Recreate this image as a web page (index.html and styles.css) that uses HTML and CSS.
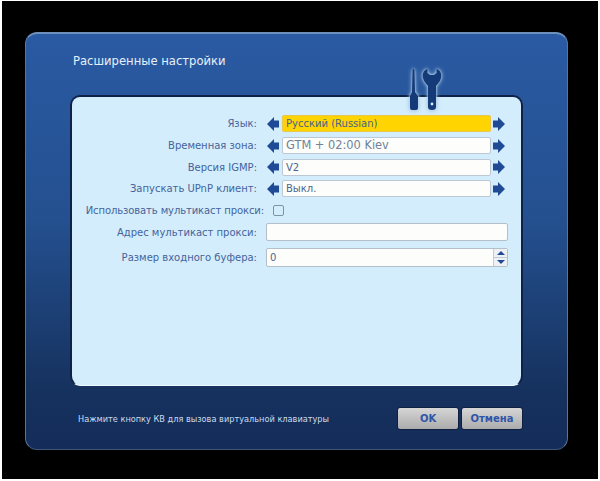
FILE: index.html
```html
<!DOCTYPE html>
<html lang="ru">
<head>
    <meta charset="UTF-8" />
    <title>Расширенные настройки</title>
    <link rel="stylesheet" href="styles.css">
</head>
<body>

<div class="screen">
    <div class="window">
        <h1 class="title">Расширенные настройки</h1>

        <div class="content">
            <svg class="tools" width="42" height="48" viewBox="0 0 42 48">
                <path class="tools-fill" d="M6.5 4 Q7.5 2 8.5 4 L9 26 L12 30 V42 Q12 44 10 44 H6 Q4 44 4 42 V30 L6 26 Z" />
                <path class="tools-fill" d="M21.5 3 C17.5 4 16 8 17 12 C18 16 20.5 18 22 20 V41 Q22 44 26 44 Q30 44 30 41 V20 C31.5 18 34 16 35 12 C36 8 34.5 4 30.5 3 V7 L28 9 H24 L21.5 7 Z" />
                <circle cx="26" cy="38" r="1.4" fill="#d4edfc" />
            </svg>

            <div class="row">
                <label class="label">Язык:</label>
                <svg class="arrow" viewBox="0 0 12 14"><path d="M0 7 L7 0 V3.5 H12 V10.5 H7 V14 Z" /></svg>
                <div class="field selected">Русский (Russian)</div>
                <svg class="arrow" viewBox="0 0 12 14"><path d="M12 7 L5 0 V3.5 H0 V10.5 H5 V14 Z" /></svg>
            </div>
            <div class="row">
                <label class="label">Временная зона:</label>
                <svg class="arrow" viewBox="0 0 12 14"><path d="M0 7 L7 0 V3.5 H12 V10.5 H7 V14 Z" /></svg>
                <div class="field big">GTM + 02:00 Kiev</div>
                <svg class="arrow" viewBox="0 0 12 14"><path d="M12 7 L5 0 V3.5 H0 V10.5 H5 V14 Z" /></svg>
            </div>
            <div class="row">
                <label class="label">Версия IGMP:</label>
                <svg class="arrow" viewBox="0 0 12 14"><path d="M0 7 L7 0 V3.5 H12 V10.5 H7 V14 Z" /></svg>
                <div class="field">V2</div>
                <svg class="arrow" viewBox="0 0 12 14"><path d="M12 7 L5 0 V3.5 H0 V10.5 H5 V14 Z" /></svg>
            </div>
            <div class="row">
                <label class="label">Запускать UPnP клиент:</label>
                <svg class="arrow" viewBox="0 0 12 14"><path d="M0 7 L7 0 V3.5 H12 V10.5 H7 V14 Z" /></svg>
                <div class="field">Выкл.</div>
                <svg class="arrow" viewBox="0 0 12 14"><path d="M12 7 L5 0 V3.5 H0 V10.5 H5 V14 Z" /></svg>
            </div>
            <div class="row">
                <label class="label label-wide">Использовать мультикаст прокси:</label>
                <span class="checkbox"></span>
            </div>
            <div class="row row-input">
                <label class="label">Адрес мультикаст прокси:</label>
                <div class="input"></div>
            </div>
            <div class="row row-spin">
                <label class="label">Размер входного буфера:</label>
                <div class="input spin">
                    <span class="spin-value">0</span>
                    <span class="spin-btns">
                        <span class="spin-btn"><i class="tri-up"></i></span>
                        <span class="spin-btn"><i class="tri-down"></i></span>
                    </span>
                </div>
            </div>
        </div>

        <div class="bottom">
            <p class="hint">Нажмите кнопку КВ для вызова виртуальной клавиатуры</p>
            <div class="buttons">
                <button class="btn">OK</button>
                <button class="btn">Отмена</button>
            </div>
        </div>
    </div>
</div>

</body>
</html>
```

FILE: styles.css
```css
* {
    box-sizing: border-box;
}
html, body {
    margin: 0;
    padding: 0;
    height: 100%;
    background: #fff;
    overflow: hidden;
}
body {
    font-family: "DejaVu Sans", sans-serif;
}
.screen {
    width: 596px;
    height: 478px;
    margin: 1px 0 0 2px;
    padding: 31px 0 0 23px;
    background: #000;
}
.window {
    width: 543px;
    height: 418px;
    padding: 19px 44px 0 44px;
    border: 1px solid #5a7599;
    border-top: 2px solid #6f8fbd;
    border-bottom-color: #3f5676;
    border-radius: 12px;
    background: linear-gradient(#2a5aa3 0%, #24508f 45%, #16325f 85%, #142c59 100%);
}
.title {
    margin: 0 0 26px 3px;
    font-size: 11.6px;
    line-height: 16px;
    font-weight: normal;
    color: #e6f0fa;
}
.content {
    position: relative;
    width: 453px;
    height: 291px;
    padding-top: 16px;
    background: #d4edfc;
    border: 2px solid #0e2148;
    border-bottom: 1px solid #eef8ff;
    border-radius: 10px;
}
.tools {
    position: absolute;
    top: -31px;
    right: 73px;
    filter: drop-shadow(0 0 1px #c2dcf0) drop-shadow(0 0 2px #8fb6d8);
}
.tools-fill {
    fill: #153a78;
}
.row {
    display: flex;
    align-items: center;
    height: 21.7px;
    color: #44639b;
    font-size: 10px;
}
.label {
    flex: none;
    width: 185px;
    text-align: right;
    white-space: nowrap;
}
.label-wide {
    width: 192px;
    letter-spacing: -0.1px;
}
.arrow {
    flex: none;
    width: 12px;
    height: 14px;
    fill: #1f4a96;
}
.row .arrow:nth-of-type(1) {
    margin: 0 3px 0 10px;
}
.row .arrow:nth-of-type(2) {
    margin-left: 2px;
}
.field {
    width: 209px;
    height: 17px;
    padding-left: 3px;
    line-height: 15px;
    border: 1px solid #bcc8d4;
    border-radius: 2px;
    background: #fdfdfb;
    color: #4c6690;
}
.field.selected {
    background: #ffd400;
    border-color: #e8c84a;
    color: #46628f;
}
.field.big {
    font-size: 11.4px;
    color: #6f8299;
}
.checkbox {
    width: 11px;
    height: 11px;
    margin-left: 9px;
    border: 1px solid #7f93a8;
    border-radius: 2px;
    background: #d4edfc;
}
.row-input {
    height: 22px;
}
.input {
    width: 242px;
    height: 18px;
    margin-left: 9px;
    border: 1px solid #b4bfca;
    border-radius: 2px;
    background: #fdfdfb;
}
.row-spin {
    height: 28px;
}
.spin {
    display: flex;
    justify-content: space-between;
    height: 19px;
    color: #4c6690;
}
.spin-value {
    padding-left: 3px;
    line-height: 17px;
}
.spin-btns {
    display: flex;
    flex-direction: column;
    width: 14px;
    border-left: 1px solid #c3ccd6;
}
.spin-btn {
    flex: 1;
    display: flex;
    align-items: center;
    justify-content: center;
    background: #eef1f3;
}
.spin-btn + .spin-btn {
    border-top: 1px solid #c3ccd6;
}
.tri-up, .tri-down {
    width: 0;
    height: 0;
    border-left: 4px solid transparent;
    border-right: 4px solid transparent;
}
.tri-up {
    border-bottom: 4px solid #1f4a96;
}
.tri-down {
    border-top: 4px solid #1f4a96;
}
.bottom {
    display: flex;
    justify-content: space-between;
    align-items: center;
    width: 453px;
    margin-top: 21px;
}
.hint {
    margin: 0 0 0 8px;
    font-size: 8.2px;
    color: #c9dcef;
}
.buttons {
    display: flex;
    gap: 2px;
}
.btn {
    width: 62px;
    height: 23px;
    padding: 0;
    border: 1px solid #0e1f42;
    border-radius: 3px;
    background: linear-gradient(#d6d6d6, #ababab);
    color: #2f55a8;
    font-family: "DejaVu Sans", sans-serif;
    font-size: 10px;
    font-weight: bold;
}
```
